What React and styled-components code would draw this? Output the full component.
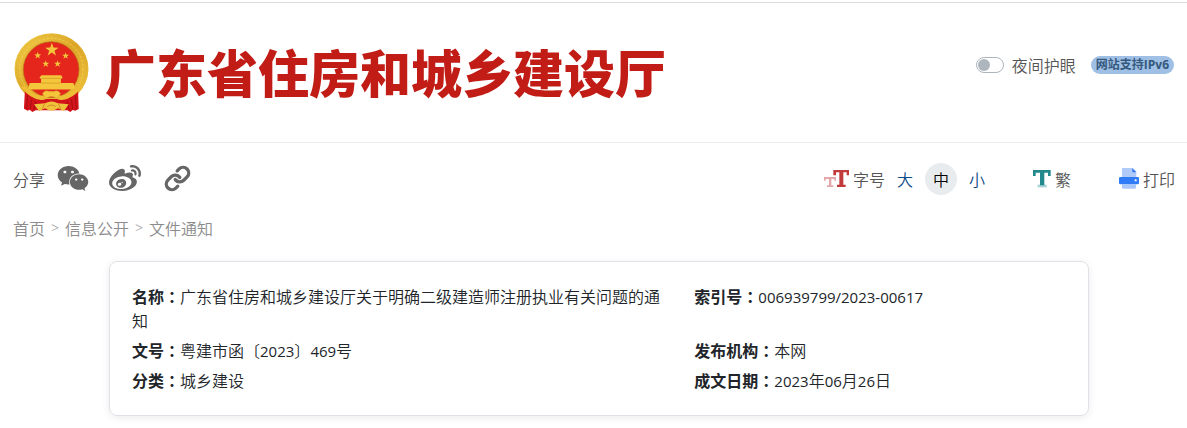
import React from "react";
import styled, { createGlobalStyle } from "styled-components";
import { FaWeixin, FaWeibo } from "react-icons/fa";
import { Link as LinkIcon } from "lucide-react";

const GlobalStyle = createGlobalStyle`
  * {
    box-sizing: border-box;
  }
  body {
    margin: 0;
    background: #fff;
    color: #212529;
    font-family: "Noto Sans CJK SC", sans-serif;
    font-size: 16px;
    font-weight: 350;
    line-height: 24px;
  }
  button, input {
    font: inherit;
  }
  a {
    color: inherit;
    text-decoration: none;
  }
`;

const Page = styled.div`
  padding-top: 2px;
`;

const Header = styled.header`
  display: flex;
  align-items: center;
  justify-content: space-between;
  height: 141px;
  padding: 0 13px;
  border-top: 1px solid #dcdcdc;
  border-bottom: 1px solid #ececec;
`;

const Brand = styled.a`
  display: flex;
  align-items: center;
  gap: 16px;
  padding-left: 1px;
`;

const SiteName = styled.h1`
  margin: 0;
  color: #c11c15;
  font-size: 51px;
  font-weight: 900;
  line-height: 80px;
  padding-bottom: 4px;
`;

const HeaderTools = styled.div`
  display: flex;
  align-items: center;
  gap: 15px;
  padding-bottom: 16px;
`;

const SwitchLabel = styled.label`
  display: flex;
  align-items: center;
  gap: 8px;
  color: #555;
`;

const Switch = styled.input`
  display: flex;
  align-items: center;
  appearance: none;
  width: 28px;
  height: 16px;
  margin: 0;
  padding: 1px;
  border: 1px solid #adb5bd;
  border-radius: 8px;
  &::before {
    content: "";
    width: 12px;
    height: 12px;
    border-radius: 50%;
    background: #adb5bd;
  }
  &:checked {
    justify-content: flex-end;
  }
`;

const Badge = styled.span`
  padding: 0 5px;
  border-radius: 9px;
  background: #9fbfe4;
  color: #34597d;
  font-family: "Open Sans", "Noto Sans CJK SC", sans-serif;
  font-size: 12px;
  font-weight: 700;
  line-height: 18px;
`;

const Toolbar = styled.div`
  display: flex;
  align-items: center;
  justify-content: space-between;
  padding: 19px 12px 0 13px;
  color: #555;
`;

const Share = styled.div`
  display: flex;
  align-items: center;
  gap: 20px;
`;

const ShareLabel = styled.span`
  margin-right: -8px;
`;

const ShareButton = styled.button`
  display: flex;
  justify-content: center;
  width: 32px;
  padding: 0;
  border: 0;
  background: none;
  color: #666;
`;

const Actions = styled.div`
  display: flex;
  align-items: center;
  gap: 40px;
`;

const SizeGroup = styled.div`
  display: flex;
  align-items: center;
  gap: 4px;
`;

const SizeButton = styled.button`
  width: 32px;
  height: 32px;
  padding: 0;
  border: 0;
  border-radius: 50%;
  background: ${({ $active }) => ($active ? "#e9ecef" : "none")};
  color: ${({ $active }) => ($active ? "#000" : "#0b4a85")};
`;

const ActionButton = styled.button`
  display: flex;
  align-items: center;
  gap: 4px;
  min-width: 46px;
  padding: 0;
  border: 0;
  background: none;
  color: #555;
`;

const Breadcrumb = styled.nav`
  display: flex;
  gap: 6px;
  padding: 21px 13px;
  color: #8c8c8c;
`;

const Separator = styled.span`
  font-family: "Open Sans", sans-serif;
  font-size: 14px;
`;

const Content = styled.main`
  padding: 0 0 12px 11px;
`;

const InfoCard = styled.dl`
  display: grid;
  grid-template-columns: 7fr 5fr;
  width: 83.3333%;
  margin: 0 auto;
  padding: 19px 7px 20px;
  border: 1px solid #dee2e6;
  border-radius: 8px;
  box-shadow: 0 2px 8px rgba(0, 0, 0, 0.08);
`;

const InfoItem = styled.div`
  padding: 3px 15px;
`;

const InfoLabel = styled.dt`
  display: inline;
  font-weight: 700;
`;

const Colon = styled.span`
  font-family: "Noto Sans CJK TC", sans-serif;
  line-height: 1;
`;

const InfoValue = styled.dd`
  display: inline;
  margin: 0;
`;

const Num = styled.span`
  font-family: "Open Sans", sans-serif;
  font-size: 15px;
  font-weight: 400;
  line-height: 1;
`;

const star = (cx, cy, r) =>
  Array.from({ length: 10 }, (_, i) => {
    const radius = i % 2 ? r * 0.39 : r;
    const a = (Math.PI / 5) * i - Math.PI / 2;
    return `${cx + radius * Math.cos(a)},${cy + radius * Math.sin(a)}`;
  }).join(" ");

const Emblem = () => (
  <svg width="75" height="80" viewBox="0 0 222 238" aria-hidden="true">
    <defs>
      <linearGradient id="gold" x1="0" y1="0" x2="1" y2="1">
        <stop offset="0" stopColor="#f3cf4a" />
        <stop offset="0.5" stopColor="#dca627" />
        <stop offset="1" stopColor="#f1c940" />
      </linearGradient>
    </defs>
    <ellipse cx="111" cy="107" rx="110" ry="106" fill="url(#gold)" />
    <ellipse cx="111" cy="107" rx="104" ry="100" fill="none" stroke="#d09a22" strokeWidth="1" strokeDasharray="5 4" />
    <ellipse cx="111" cy="107" rx="94" ry="91" fill="none" stroke="#f7d862" strokeWidth="2" strokeDasharray="7 5" />
    <circle cx="110" cy="109" r="83" fill="#e5261c" stroke="#b8761b" strokeWidth="2" />
    <g fill="#f3c63c">
      <polygon points={star(112, 50, 21)} />
      <polygon points={star(70, 67, 11)} />
      <polygon points={star(153, 68, 11)} />
      <polygon points={star(94, 92, 11)} />
      <polygon points={star(129, 92, 11)} />
      <path d="M81 126H140L144 133L139 137V149H176L181 165Q176 168 172 168H49Q43 168 42 165L46 149H80V137L75 133Z" />
    </g>
    <path d="M80 135H139M80 149H139" stroke="#cf961f" strokeWidth="2" />
    <path d="M32 168Q56 196 92 196H130Q166 196 190 168L192 226L182 231L174 229L167 235L158 230H64L54 235L46 228L40 231L29 225Z" fill="#d4141b" />
    <path d="M40 186L37 226M52 198L47 227M64 204L58 230M182 186L185 226M170 198L174 227M158 204L164 230" stroke="#a80e13" strokeWidth="3" />
    <path d="M26 158Q52 190 80 193Q92 194 97 184Q110 175 124 184Q130 194 142 193Q170 190 196 158" fill="none" stroke="#eebc35" strokeWidth="13" />
    <path d="M84 180Q92 167 104 174Q111 178 118 174Q130 167 138 180L128 194Q111 184 94 194Z" fill="#f3c63c" stroke="#cf961f" strokeWidth="1" />
    <path d="M59 212L92 209Q111 199 130 209L162 212L148 232L130 224Q111 238 92 224L74 232Z" fill="#efc23c" />
    <path d="M90 211L84 226M132 211L138 226M98 219Q111 210 124 219" fill="none" stroke="#cd6a25" strokeWidth="2" />
  </svg>
);

const FontSizeIcon = () => (
  <svg width="25" height="18" viewBox="0 0 75 54" aria-hidden="true">
    <path d="M0 21H36V32H31V27H22V46H28V51H9V46H15V27H5V32H0Z" fill="#e3a8aa" />
    <path d="M28 0H75V16H68V7H58V44H65V51H39V44H46V7H36V16H28Z" fill="#c13a3c" />
  </svg>
);

const TraditionalIcon = () => (
  <svg width="18" height="18" viewBox="0 0 54 54" aria-hidden="true">
    <path d="M14 44H41V52H14Z" fill="#a5d3d5" />
    <path d="M0 0H53V18H45V8H34V46H21V8H8V18H0Z" fill="#24898c" />
  </svg>
);

const PrintIcon = () => (
  <svg width="20" height="21" viewBox="0 0 60 63" aria-hidden="true">
    <path d="M9 0H42L52 11V30H9Z" fill="#b0cbf9" />
    <path d="M40 1L52 13H43Q40 13 40 10Z" fill="#2d75f2" />
    <rect x="0" y="27" width="60" height="22" rx="4" fill="#2f7cf6" />
    <path d="M9 48H51V58Q51 62 47 62H13Q9 62 9 58Z" fill="#a9c7fb" />
    <rect x="47" y="34" width="6" height="6" rx="2" fill="#fff" />
  </svg>
);

const shareLinks = [
  { name: "微信", icon: <FaWeixin size={33} /> },
  { name: "微博", icon: <FaWeibo size={32} /> },
  { name: "复制链接", icon: <LinkIcon size={27} strokeWidth={3} /> },
];

const documentInfo = [
  { label: "名称", value: "广东省住房和城乡建设厅关于明确二级建造师注册执业有关问题的通知" },
  { label: "索引号", value: <Num>006939799/2023-00617</Num> },
  { label: "文号", value: <>粤建市函〔<Num>2023</Num>〕<Num>469</Num>号</> },
  { label: "发布机构", value: "本网" },
  { label: "分类", value: "城乡建设" },
  { label: "成文日期", value: <><Num>2023</Num>年<Num>06</Num>月<Num>26</Num>日</> },
];

class App extends React.Component {
  state = { size: "中" };

  render() {
    const { size } = this.state;
    return (
      <Page>
        <GlobalStyle />
        <Header>
          <Brand href="#">
            <Emblem />
            <SiteName>广东省住房和城乡建设厅</SiteName>
          </Brand>
          <HeaderTools>
            <SwitchLabel htmlFor="night">
              <Switch id="night" type="checkbox" />
              夜间护眼
            </SwitchLabel>
            <Badge>网站支持IPv6</Badge>
          </HeaderTools>
        </Header>
        <Toolbar>
          <Share>
            <ShareLabel>分享</ShareLabel>
            {shareLinks.map(link => (
              <ShareButton key={link.name} type="button" aria-label={link.name}>
                {link.icon}
              </ShareButton>
            ))}
          </Share>
          <Actions>
            <SizeGroup>
              <FontSizeIcon />
              <span>字号</span>
              {["大", "中", "小"].map(item => (
                <SizeButton
                  key={item}
                  type="button"
                  $active={item === size}
                  onClick={() => this.setState({ size: item })}
                >
                  {item}
                </SizeButton>
              ))}
            </SizeGroup>
            <ActionButton type="button">
              <TraditionalIcon />
              繁
            </ActionButton>
            <ActionButton type="button">
              <PrintIcon />
              打印
            </ActionButton>
          </Actions>
        </Toolbar>
        <Breadcrumb>
          <a href="#">首页</a>
          <Separator>&gt;</Separator>
          <a href="#">信息公开</a>
          <Separator>&gt;</Separator>
          <a href="#">文件通知</a>
        </Breadcrumb>
        <Content>
          <InfoCard>
            {documentInfo.map(item => (
              <InfoItem key={item.label}>
                <InfoLabel>
                  {item.label}
                  <Colon>：</Colon>
                </InfoLabel>
                <InfoValue>{item.value}</InfoValue>
              </InfoItem>
            ))}
          </InfoCard>
        </Content>
      </Page>
    );
  }
}

export default App;
